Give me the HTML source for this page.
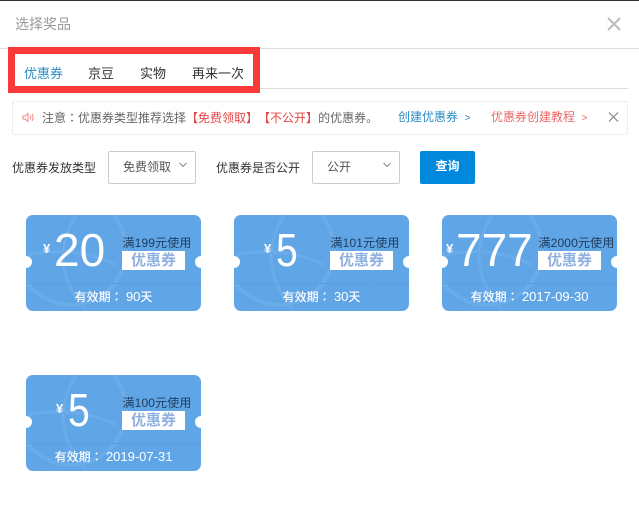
<!DOCTYPE html>
<html>
<head>
<meta charset="utf-8">
<style>
html,body{margin:0;padding:0;background:#fff;}
body{width:639px;height:531px;overflow:hidden;position:relative;font-family:"Liberation Sans","Noto Sans CJK SC",sans-serif;font-size:12px;color:#333;text-spacing-trim:space-all;}
.a{position:absolute;white-space:nowrap;}
.tc{font-family:"Noto Sans CJK TC",sans-serif;}
.sel{position:absolute;top:151px;width:86px;height:31px;border:1px solid #ccc;border-radius:2px;}
.c{position:absolute;width:175px;height:96px;background:#60a5e6;border-radius:7px;overflow:hidden;}
.c .n{position:absolute;top:-2px;color:#fff;font-size:46px;line-height:74px;white-space:nowrap;}
.c .n5{transform:scaleX(.85);transform-origin:0 50%;}
.c .y{position:absolute;top:27px;color:#fff;font-size:13px;font-weight:bold;line-height:14px;}
.c .m{position:absolute;top:20px;left:96.500px;color:#1f3a5a;font-size:12px;line-height:16px;white-space:nowrap;letter-spacing:.15px;}
.c .t{position:absolute;top:36px;left:96px;width:63px;height:19px;background:#fff;color:#8fb0e0;font-size:15px;font-weight:bold;line-height:19px;text-align:center;}
.c .d{position:absolute;left:0;right:0;top:68px;border-top:1px dashed #589bdc;}
.c .e{position:absolute;top:73px;left:0;width:175px;text-align:center;color:#fff;font-size:12px;line-height:17px;white-space:nowrap;font-weight:500;}
.c .e b{font-weight:normal;font-size:13px;}
.c .h{position:absolute;top:41px;width:12px;height:12px;border-radius:50%;background:#fff;}
.c svg{position:absolute;left:0;top:0;}
</style>
</head>
<body>
<div class="a" style="left:0;top:0;width:639px;height:1px;background:#333;"></div>
<div class="a" style="left:15px;top:14px;font-size:14px;line-height:20px;color:#999;">选择奖品</div>
<svg class="a" style="left:606px;top:16px;" width="16" height="16" viewBox="0 0 16 16"><path d="M2 2L14 14M14 2L2 14" stroke="#bbb" stroke-width="2" fill="none"/></svg>
<div class="a" style="left:0;top:48px;width:639px;height:1px;background:#ddd;"></div>
<div class="a" style="left:12px;top:88px;width:616px;height:1px;background:#ddd;"></div>
<div class="a" style="left:8px;top:47px;width:238px;height:32px;border:7px solid #f93a3a;background:#fff;"></div>
<div class="a" style="left:24px;top:65px;font-size:13px;line-height:18px;color:#2b8cc4;">优惠券</div>
<div class="a" style="left:88px;top:65px;font-size:13px;line-height:18px;">京豆</div>
<div class="a" style="left:140px;top:65px;font-size:13px;line-height:18px;">实物</div>
<div class="a" style="left:192px;top:65px;font-size:13px;line-height:18px;">再来一次</div>

<div class="a" style="left:12px;top:101px;width:614px;height:32px;border:1px dotted #ddd;border-radius:2px;"></div>
<svg class="a" style="left:22px;top:111px;" width="13" height="13" viewBox="0 0 13 13"><path d="M1 5H3L6 2.500V10.500L3 8H1ZM8 4.500Q9.500 6.500 8 8.500M10 3Q12 6.500 10 10" stroke="#e88" fill="none"/></svg>
<div class="a" style="left:42px;top:109px;line-height:17px;color:#666;">注意<span class="tc">：</span>优惠券类型推荐选择<span style="color:#e64545;">【免费领取】【不公开】</span>的优惠券。</div>
<div class="a" style="left:398px;top:109px;line-height:17px;color:#2b8cc4;">创建优惠券 &nbsp;<span style="font-size:10px;">&gt;</span></div>
<div class="a" style="left:491px;top:109px;line-height:17px;color:#e96a6a;">优惠券创建教程 &nbsp;<span style="font-size:10px;">&gt;</span></div>
<svg class="a" style="left:608px;top:111px;" width="11" height="12" viewBox="0 0 11 12"><path d="M1 1.500L10 10.500M10 1.500L1 10.500" stroke="#888" stroke-width="1.200" fill="none"/></svg>

<div class="a" style="left:12px;top:160px;line-height:17px;">优惠券发放类型</div>
<div class="sel" style="left:108px;"></div>
<div class="a" style="left:123px;top:159px;line-height:17px;color:#555;">免费领取</div>
<svg class="a" style="left:178px;top:162px;" width="10" height="6" viewBox="0 0 10 6"><path d="M1.500 1L5 4.500L8.500 1" stroke="#888" fill="none"/></svg>
<div class="a" style="left:216px;top:160px;line-height:17px;">优惠券是否公开</div>
<div class="sel" style="left:312px;"></div>
<div class="a" style="left:327px;top:159px;line-height:17px;color:#555;">公开</div>
<svg class="a" style="left:382px;top:162px;" width="10" height="6" viewBox="0 0 10 6"><path d="M1.500 1L5 4.500L8.500 1" stroke="#888" fill="none"/></svg>
<div class="a" style="left:420px;top:151px;width:55px;height:33px;background:#0088dd;border-radius:2px;color:#fff;text-align:center;line-height:31px;font-weight:bold;">查询</div>

<div class="c" style="left:26px;top:215px;">
<svg width="175" height="96"><circle cx="45" cy="35" r="55" fill="none" stroke="#6aabe9" stroke-width="4"/><path d="M0 40Q50 30 90 50M50 0Q20 50 60 96" fill="none" stroke="#6aabe9" stroke-width="3"/></svg>
<div class="y" style="left:17px;">¥</div><div class="n" style="left:28px;">20</div>
<div class="m">满199元使用</div><div class="t">优惠券</div><div class="d"></div>
<div class="e">有效期<span class="tc">：</span> <b>90</b>天</div>
<div class="h" style="left:-6px;"></div><div class="h" style="right:-6px;"></div>
</div>

<div class="c" style="left:234px;top:215px;">
<svg width="175" height="96"><circle cx="45" cy="35" r="55" fill="none" stroke="#6aabe9" stroke-width="4"/><path d="M0 40Q50 30 90 50M50 0Q20 50 60 96" fill="none" stroke="#6aabe9" stroke-width="3"/></svg>
<div class="y" style="left:30px;">¥</div><div class="n n5" style="left:42px;">5</div>
<div class="m">满101元使用</div><div class="t">优惠券</div><div class="d"></div>
<div class="e">有效期<span class="tc">：</span> <b>30</b>天</div>
<div class="h" style="left:-6px;"></div><div class="h" style="right:-6px;"></div>
</div>

<div class="c" style="left:442px;top:215px;">
<svg width="175" height="96"><circle cx="45" cy="35" r="55" fill="none" stroke="#6aabe9" stroke-width="4"/><path d="M0 40Q50 30 90 50M50 0Q20 50 60 96" fill="none" stroke="#6aabe9" stroke-width="3"/></svg>
<div class="y" style="left:4px;">¥</div><div class="n" style="left:14px;">777</div>
<div class="m">满2000元使用</div><div class="t">优惠券</div><div class="d"></div>
<div class="e">有效期<span class="tc">：</span> <b>2017-09-30</b></div>
<div class="h" style="left:-6px;"></div><div class="h" style="right:-6px;"></div>
</div>

<div class="c" style="left:26px;top:375px;">
<svg width="175" height="96"><circle cx="45" cy="35" r="55" fill="none" stroke="#6aabe9" stroke-width="4"/><path d="M0 40Q50 30 90 50M50 0Q20 50 60 96" fill="none" stroke="#6aabe9" stroke-width="3"/></svg>
<div class="y" style="left:30px;">¥</div><div class="n n5" style="left:42px;">5</div>
<div class="m">满100元使用</div><div class="t">优惠券</div><div class="d"></div>
<div class="e">有效期<span class="tc">：</span> <b>2019-07-31</b></div>
<div class="h" style="left:-6px;"></div><div class="h" style="right:-6px;"></div>
</div>
</body>
</html>
